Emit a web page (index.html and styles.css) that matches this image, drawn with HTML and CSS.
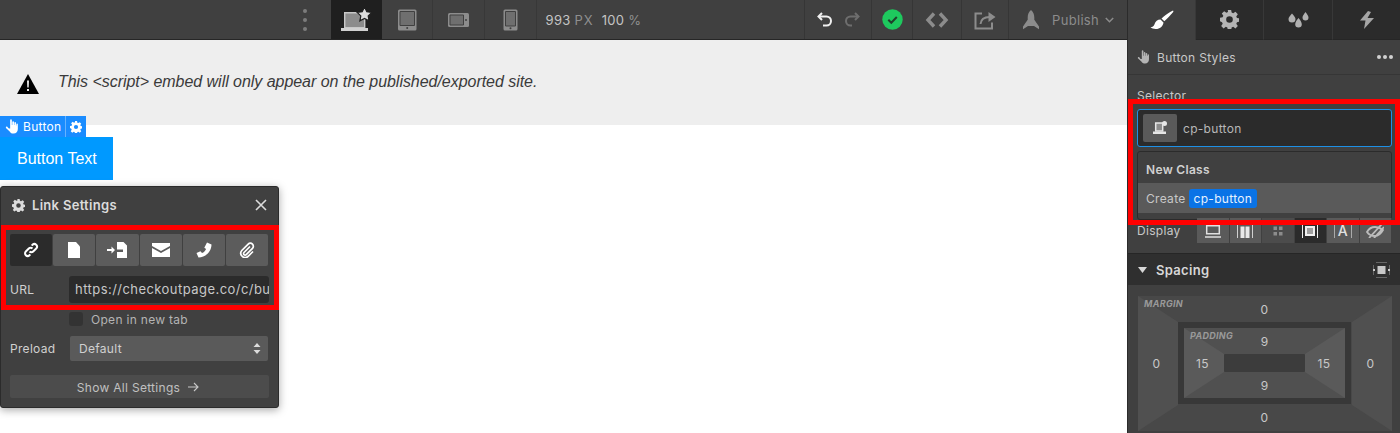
FILE: index.html
```html
<!DOCTYPE html>
<html lang="en">
<head>
    <meta charset="UTF-8">
    <meta name="viewport" content="width=device-width, initial-scale=1.0">
    <title>Designer</title>
    <link rel="stylesheet" href="styles.css">
</head>
<body>
    <svg class="defs" width="0" height="0">
        <symbol id="gear" viewBox="0 0 16 16">
            <path fill-rule="evenodd" d="M6.600 0h2.800l.4 2.200 1.300.6 1.900-1.300 2 2-1.300 1.900.6 1.300 2.200.4v2.800l-2.200.4-.6 1.300 1.300 1.900-2 2-1.900-1.300-1.300.6-.4 2.200H6.600l-.4-2.200-1.300-.6-1.900 1.300-2-2 1.300-1.900-.6-1.300L0 9.400V6.600l2.200-.4.6-1.300L1.500 3l2-2 1.900 1.300 1.300-.6zM8 5.200a2.800 2.800 0 1 0 0 5.600 2.800 2.800 0 0 0 0-5.600z"/>
        </symbol>
        <symbol id="hand" viewBox="0 0 16 16">
            <path d="M5.500 1.200c0-.6.400-1 .9-1s.9.400.9 1v5.300h.5V3.300c0-.5.400-.9.900-.9s.9.400.9.900v3.200h.4V4.200c0-.5.400-.9.900-.9s.8.400.8.900v2.700h.4V5.700c0-.5.400-.8.800-.8s.8.300.8.800v5c0 2.700-1.700 4.800-4.500 4.800-2 0-3.200-.7-4.200-2.300L1 9.500c-.3-.5-.1-1 .3-1.300.4-.3 1-.2 1.300.2l1.500 1.800h1.400z"/>
        </symbol>
    </svg>

    <div class="app">
        <main class="designer">
            <header class="topbar">
                <div class="bar-dots"><span></span><span></span><span></span></div>
                <div class="device active">
                    <svg width="32" height="26" viewBox="0 0 32 26">
                        <path fill="#8c8c8c" stroke="#c8c8c8" stroke-width="1.400" d="M4.700 5.700h20v15h-20z"/>
                        <path fill="#d0d0d0" d="M1 21h27v3H1z"/>
                        <path fill="#dcdcdc" stroke="#1f1f1f" stroke-width="1.200" d="M24.500 0l2.300 4.700 5 .7-3.600 3.500.9 5-4.600-2.400-4.600 2.400.9-5-3.600-3.500 5-.7z"/>
                    </svg>
                </div>
                <div class="device">
                    <svg width="20" height="22" viewBox="0 0 20 22"><rect x="1" y=".5" width="18.500" height="21" rx="1.500" fill="#8c8c8c"/><path fill="#6f6f6f" stroke="#404040" d="M3 2.500h14.500v14H3z"/><circle cx="10.200" cy="19" r="1" fill="#404040"/></svg>
                </div>
                <div class="device device-wide">
                    <svg width="22" height="16" viewBox="0 0 22 16"><rect x="1" y="1" width="21" height="14" rx="1.500" fill="#8c8c8c"/><path fill="#6f6f6f" stroke="#404040" d="M3 3h13.500v10H3z"/><circle cx="19" cy="8" r="1" fill="#404040"/></svg>
                </div>
                <div class="device device-wide">
                    <svg width="15" height="22" viewBox="0 0 15 22"><rect x=".5" y=".5" width="14" height="21" rx="1.500" fill="#8c8c8c"/><path fill="#6f6f6f" stroke="#404040" d="M2.500 2.500h10v14.500h-10z"/><circle cx="7.500" cy="19.300" r="1" fill="#404040"/></svg>
                </div>
                <div class="readout">
                    <span class="num">993</span> <span class="unit">PX</span>
                    <span class="num pct">100</span> <span class="unit">%</span>
                </div>
                <div class="bar-cell history">
                    <svg width="18" height="18" viewBox="0 0 18 18" fill="none" stroke="#f0f0f0" stroke-width="2"><path d="M6 2L2.500 5.500 6 9"/><path d="M3 5.500h7.500a4.500 4.500 0 0 1 0 9H7"/></svg>
                    <svg width="18" height="18" viewBox="0 0 18 18" fill="none" stroke="#6e6e6e" stroke-width="2"><path d="M12 2l3.500 3.500L12 9"/><path d="M15 5.500H7.500a4.500 4.500 0 0 0 0 9H9"/></svg>
                </div>
                <div class="bar-cell status">
                    <svg width="21" height="21" viewBox="0 0 21 21"><circle cx="10.500" cy="10.500" r="10.200" fill="#1ec95e"/><path fill="none" stroke="#20402c" stroke-width="2" d="M6.300 10.700l3 3 5.500-5.700"/></svg>
                </div>
                <div class="bar-cell code">
                    <svg width="24" height="16" viewBox="0 0 24 16" fill="none" stroke="#8c8c8c" stroke-width="3.400"><path d="M9 1.500L3 8l6 6.500"/><path d="M15 1.500L21 8l-6 6.500"/></svg>
                </div>
                <div class="bar-cell export">
                    <svg width="22" height="20" viewBox="0 0 22 20" fill="none" stroke="#8c8c8c" stroke-width="2"><path d="M8 3.500H1.500v15H18v-6"/><path d="M6.500 14c.5-5 3.500-7 9-7"/><path fill="#8c8c8c" stroke="none" d="M14.500 2l7 5-7 5z"/></svg>
                </div>
                <div class="bar-cell publish">
                    <svg width="20" height="20" viewBox="0 0 20 20"><path fill="#8c8c8c" d="M10 0c2.200 1.800 3.300 4.500 3.300 7.500v2.200l4.700 6.800v2.700l-5-3.300h-6l-5 3.300v-2.700l4.700-6.800V7.500C6.700 4.500 7.800 1.800 10 0z"/></svg>
                    <span>Publish</span>
                    <svg class="chev" width="9" height="6" viewBox="0 0 9 6" fill="none" stroke="#8c8c8c" stroke-width="1.500"><path d="M.8 1l3.700 3.700L8.200 1"/></svg>
                </div>
            </header>

            <section class="canvas">
                <div class="embed-note">
                    <svg width="22" height="20" viewBox="0 0 22 20"><path d="M11 0l11 20H0z"/><path fill="#eee" d="M10 6.500h2l-.3 7h-1.400zM10 15h2v2h-2z"/></svg>
                    <p>This &lt;script&gt; embed will only appear on the published/exported site.</p>
                </div>
                <div class="element-tag">
                    <span class="tag-name"><svg width="15" height="15"><use href="#hand"/></svg>Button</span>
                    <span class="tag-gear"><svg width="12" height="12"><use href="#gear"/></svg></span>
                </div>
                <a class="cp-button">Button Text</a>

                <div class="link-settings">
                    <div class="ls-head">
                        <svg width="13" height="13"><use href="#gear"/></svg>
                        <span>Link Settings</span>
                        <svg class="ls-close" width="12" height="12" viewBox="0 0 12 12" fill="none" stroke="#dcdcdc" stroke-width="1.600"><path d="M1 1l10 10M11 1L1 11"/></svg>
                    </div>
                    <div class="ls-tabs">
                        <span class="ls-tab active">
                            <svg width="16" height="16" viewBox="0 0 16 16" fill="none" stroke="#fff" stroke-width="2"><path d="M6.500 9.500a2.600 2.600 0 0 0 3.700 0l3-3a2.600 2.600 0 0 0-3.700-3.700L8.700 3.600"/><path d="M9.500 6.500a2.600 2.600 0 0 0-3.700 0l-3 3a2.600 2.600 0 0 0 3.700 3.700l.8-.8"/></svg>
                        </span>
                        <span class="ls-tab">
                            <svg width="14" height="16" viewBox="0 0 14 16"><path fill="#fff" d="M1 0h8l4 4.500V16H1z"/></svg>
                        </span>
                        <span class="ls-tab">
                            <svg width="22" height="16" viewBox="0 0 22 16"><path fill="#fff" d="M11 0h6.500L21 3.500V16H11v-6h6V7.500h-6z"/><path fill="#fff" d="M1 7h4.500V4.500L9 8l-3.500 3.500V9H1z"/></svg>
                        </span>
                        <span class="ls-tab">
                            <svg width="18" height="14" viewBox="0 0 18 14"><path fill="#fff" d="M0 0h18v3l-9 5-9-5z"/><path fill="#fff" d="M0 5l9 5 9-5v9H0z"/></svg>
                        </span>
                        <span class="ls-tab">
                            <svg width="16" height="16" viewBox="0 0 16 16"><path fill="#fff" d="M11 .5l4.500 2C15.500 9.500 9.500 15.500 2.500 15.500L.5 11l4-1.800 1.500 1.800c1.800-.8 3.300-2.300 4.100-4.100L8.300 5.800z"/></svg>
                        </span>
                        <span class="ls-tab">
                            <svg width="16" height="16" viewBox="0 0 16 16" fill="none" stroke="#fff" stroke-width="1.700"><path d="M11 4.500l-6 6a1.500 1.500 0 0 0 2.200 2.200l6.300-6.400a3 3 0 0 0-4.300-4.200L2.800 8.500a4.300 4.300 0 0 0 6.100 6L14 9.500"/></svg>
                        </span>
                    </div>
                    <div class="ls-row ls-url">
                        <label>URL</label>
                        <div class="ls-input">https://checkoutpage.co/c/button</div>
                    </div>
                    <div class="ls-check"><span class="box"></span>Open in new tab</div>
                    <div class="ls-row ls-preload">
                        <label>Preload</label>
                        <div class="ls-select">Default
                            <svg width="8" height="11" viewBox="0 0 8 11" fill="#dcdcdc"><path d="M4 0l3.500 4h-7zM4 11L.5 7h7z"/></svg>
                        </div>
                    </div>
                    <div class="ls-all">Show All Settings
                        <svg width="11" height="10" viewBox="0 0 11 10" fill="none" stroke="#c8c8c8" stroke-width="1.100"><path d="M0 5h10M6 1l4 4-4 4"/></svg>
                    </div>
                    <div class="red-frame ls-frame"></div>
                </div>
            </section>
        </main>

        <aside class="panel">
            <nav class="panel-tabs">
                <span class="panel-tab active">
                    <svg width="24" height="20" viewBox="0 0 24 20" fill="#fff"><path d="M23 .5c.6.500.5 1.100 0 1.700-2.500 3-6 6.800-8.700 9L11.500 8.500C14.500 5.500 19.500 2 23 .5z"/><path d="M10.500 9.500l3 3c-.3 4-4.300 6.800-8 6.500-2 0-3.800-.5-5-1.700 2.500-.3 3.300-1.300 4-3 .9-2.800 3-4.800 6-4.800z"/></svg>
                </span>
                <span class="panel-tab"><svg width="19" height="19" fill="#b4b4b4"><use href="#gear"/></svg></span>
                <span class="panel-tab">
                    <svg width="21" height="16" viewBox="0 0 21 16" fill="#b0b0b0"><path d="M4 1.500c1.800 2.300 3.500 3.700 3.500 5.500a3.500 3.500 0 0 1-7 0c0-1.800 1.700-3.200 3.500-5.500zM17.500 0c1.500 2.200 3 3.700 3 5.500a3 3 0 0 1-6 0c0-1.800 1.500-3.300 3-5.500zM10.500 6c1.600 2.200 3.300 4 3.300 6.300a3.300 3.300 0 0 1-6.600 0c0-2.300 1.700-4.100 3.300-6.300z"/></svg>
                </span>
                <span class="panel-tab">
                    <svg width="14" height="18" viewBox="0 0 14 18" fill="#a6a6a6"><path d="M8 0L0 9.500h5.500L4 18l10-11H7.500L11 1z"/></svg>
                </span>
            </nav>

            <div class="panel-head">
                <svg width="14" height="14" fill="#b4b4b4"><use href="#hand"/></svg>
                <span>Button Styles</span>
                <span class="more"><i></i><i></i><i></i></span>
            </div>

            <div class="selector">
                <label>Selector</label>
                <div class="selector-field">
                    <span class="selector-icon">
                        <svg width="15" height="14" viewBox="0 0 15 14"><path fill="#8c8c8c" stroke="#e6e6e6" stroke-width="1.500" d="M2.700 2h7v8h-7z"/><path fill="#e6e6e6" d="M0 10.500h13V13H0z"/><circle cx="11.500" cy="2.500" r="2.500" fill="#e6e6e6"/></svg>
                    </span>
                    cp-button
                </div>
                <div class="selector-menu">
                    <div class="menu-title">New Class</div>
                    <div class="menu-create">Create <span class="chip">cp-button</span></div>
                </div>
            </div>

            <div class="display-row">
                <label>Display</label>
                <div class="display-btns">
                    <span class="dbtn"><svg width="16" height="14" viewBox="0 0 16 14" fill="none" stroke="#e0e0e0" stroke-width="1.500"><path d="M1.700 1.700h12.600v8H1.700zM0 13h16"/></svg></span>
                    <span class="dbtn"><svg width="16" height="14" viewBox="0 0 16 14"><path fill="none" stroke="#d0d0d0" d="M.5 14V.5h15V14"/><path fill="#e8e8e8" d="M3.500 2.500h4v11.500h-4zM8.500 2.500h4v11.500h-4z"/></svg></span>
                    <span class="dbtn dim"><svg width="16" height="14" viewBox="0 0 16 14" fill="#8c8c8c"><path d="M3.500 2.500h3.500v3.500H3.500zM9 2.500h3.500v3.500H9zM3.500 8h3.500v3.500H3.500zM9 8h3.500v3.500H9z"/></svg></span>
                    <span class="dbtn on"><svg width="16" height="14" viewBox="0 0 16 14"><path fill="none" stroke="#f0f0f0" d="M.5 0v14M15.500 0v14"/><path fill="none" stroke="#f0f0f0" stroke-width="2" d="M4 3h8v8H4z"/><path fill="#a0a0a0" d="M5 4h6v6H5z"/></svg></span>
                    <span class="dbtn dtext"><span>A</span></span>
                    <span class="dbtn"><svg width="18" height="14" viewBox="0 0 18 14" fill="none" stroke="#bcbcbc" stroke-width="1.800"><path d="M1 8c2-3.500 5-5 8-5s6 1.500 8 3c-2 3.500-5 6-8 6s-6-1-8-4zM3 14L16 0M8 14L18 3"/></svg></span>
                </div>
            </div>

            <div class="section-head">
                <svg width="9" height="6" viewBox="0 0 9 6" fill="#d8d8d8"><path d="M0 0h9L4.500 6z"/></svg>
                <span>Spacing</span>
                <svg class="section-icon" width="17" height="16" viewBox="0 0 17 16"><path fill="none" stroke="#666" d="M.5 3v10M16.500 3v10M3 .5h11M3 15.500h11"/><path fill="#c8c8c8" d="M4.500 4h8v8h-8z"/><path fill="#c8c8c8" d="M0 7h2v2H0zM15 7h2v2h-2z"/></svg>
            </div>

            <div class="box-model">
                <svg class="box-shade" viewBox="0 0 254 135" preserveAspectRatio="none">
                    <path fill="#484848" d="M0 0h254v135H0z"/>
                    <path fill="#505050" d="M0 0l40 26v83L0 135zM254 0l-40 26v83l40 26z"/>
                </svg>
                <span class="box-label">MARGIN</span>
                <span class="bm-top">0</span>
                <span class="bm-left">0</span>
                <div class="pad-box">
                    <svg class="box-shade" viewBox="0 0 161 70" preserveAspectRatio="none">
                        <path fill="#505050" d="M0 0h161v70H0z"/>
                        <path fill="#5a5a5a" d="M0 0l40 26v18L0 70zM161 0l-40 26v18l40 26z"/>
                    </svg>
                    <span class="box-label">PADDING</span>
                    <span class="bm-top">9</span>
                    <span class="bm-left">15</span>
                    <div class="content-box"></div>
                    <span class="bm-right">15</span>
                    <span class="bm-bottom">9</span>
                </div>
                <span class="bm-right">0</span>
                <span class="bm-bottom">0</span>
            </div>

            <div class="red-frame selector-frame"></div>
        </aside>
    </div>
</body>
</html>
```

FILE: styles.css
```css
* {
    box-sizing: border-box;
}

html, body {
    margin: 0;
    padding: 0;
    height: 433px;
    overflow: hidden;
    background: #fff;
}

body {
    font-family: 'Inter', 'Liberation Sans', sans-serif;
    font-size: 12px;
    letter-spacing: 0.3px;
    color: #d9d9d9;
}

.defs {
    position: absolute;
}

.app {
    display: grid;
    grid-template-columns: 1127px 273px;
    height: 433px;
}

.designer {
    display: flex;
    flex-direction: column;
    min-width: 0;
}

/* Top bar */
.topbar {
    display: flex;
    height: 40px;
    flex: none;
    background: #404040;
    border-bottom: 1px solid #262626;
}

.bar-dots {
    width: 331px;
    padding-right: 24px;
    display: flex;
    flex-direction: column;
    align-items: flex-end;
    justify-content: center;
    gap: 5px;
}

.bar-dots span {
    width: 4px;
    height: 4px;
    border-radius: 50%;
    background: #7c7c7c;
}

.device {
    width: 51px;
    display: flex;
    align-items: center;
    justify-content: center;
    border-right: 1px solid #383838;
}

.device-wide {
    width: 52px;
}

.device.active {
    background: #1f1f1f;
    border-right: 0;
}

.readout {
    width: 268px;
    padding: 0 0 0 9px;
    font-size: 13px;
    line-height: 40px;
    white-space: nowrap;
}

.readout .num {
    color: #c4c4c4;
}

.readout .unit {
    color: #8f8f8f;
    letter-spacing: 1px;
}

.readout .pct {
    margin-left: 4px;
}

.bar-cell {
    display: flex;
    align-items: center;
    justify-content: center;
    border-left: 1px solid #363636;
}

.history {
    width: 67px;
    gap: 9px;
}

.status {
    width: 41px;
}

.code {
    width: 49px;
}

.export {
    width: 47px;
}

.publish {
    width: 119px;
    gap: 0;
    justify-content: flex-start;
    padding-left: 12px;
    color: #8c8c8c;
    font-size: 13px;
}

.publish span {
    margin-left: 11px;
}

.publish .chev {
    margin-left: 6px;
}

/* Canvas */
.canvas {
    position: relative;
    flex: 1;
    background: #fff;
}

.embed-note {
    height: 85px;
    background: #eeeeee;
    display: flex;
    align-items: center;
    padding: 0 0 2px 17px;
    gap: 19px;
}

.embed-note svg {
    margin-top: 4px;
}

.embed-note p {
    margin: 0;
    font-family: 'Liberation Sans', Arial, sans-serif;
    font-style: italic;
    font-size: 16px;
    letter-spacing: -0.04px;
    color: #3a3a3a;
}

.element-tag {
    position: absolute;
    left: 0;
    top: 76px;
    height: 21px;
    display: flex;
    background: #1a8cff;
    color: #fff;
    font-size: 12px;
}

.tag-name {
    display: flex;
    align-items: center;
    gap: 3px;
    width: 66px;
    padding-left: 5px;
    border-right: 1px solid #66b3ff;
}

.tag-name svg,
.tag-gear svg {
    fill: #fff;
}

.tag-gear {
    width: 20px;
    display: flex;
    align-items: center;
    justify-content: center;
}

.cp-button {
    display: block;
    width: 113px;
    margin-top: 12px;
    padding: 9px 17px;
    background: #0099ff;
    color: #fff;
    font-family: 'Liberation Sans', Arial, sans-serif;
    font-size: 16px;
    line-height: 25px;
    letter-spacing: 0;
    white-space: nowrap;
}

/* Link settings popup */
.link-settings {
    position: absolute;
    left: 0;
    top: 146px;
    width: 279px;
    height: 222px;
    background: #404040;
    border: 1px solid #2b2b2b;
    border-radius: 3px;
    box-shadow: 0 2px 8px rgba(0, 0, 0, 0.35);
    padding: 0 9px;
}

.ls-head {
    display: flex;
    align-items: center;
    height: 36px;
    font-size: 13px;
    font-weight: 600;
    color: #dcdcdc;
    gap: 7px;
    padding-left: 2px;
}

.ls-head > svg:first-child {
    fill: #dcdcdc;
}

.ls-close {
    margin-left: auto;
    margin-right: 2px;
}

.ls-tabs {
    display: grid;
    grid-template-columns: repeat(6, 1fr);
    gap: 1px;
    width: 258px;
    height: 32px;
    margin-top: 11px;
}

.ls-tab {
    display: flex;
    align-items: center;
    justify-content: center;
    background: #5c5c5c;
    border-radius: 2px;
}

.ls-tab.active {
    background: #2b2b2b;
}

.ls-row {
    display: flex;
    align-items: center;
}

.ls-row label {
    width: 59px;
    color: #d0d0d0;
    font-size: 12px;
}

.ls-url {
    margin-top: 10px;
}

.ls-input {
    width: 200px;
    height: 27px;
    padding: 0 3px 0 6px;
    background: #2b2b2b;
    border-radius: 3px;
    font-size: 13px;
    letter-spacing: 0.45px;
    line-height: 27px;
    color: #c8c8c8;
    overflow: hidden;
    white-space: nowrap;
}

.ls-check {
    display: flex;
    align-items: center;
    height: 14px;
    margin: 9px 0 0 59px;
    gap: 8px;
    color: #b4b4b4;
    font-size: 12px;
}

.ls-check .box {
    width: 14px;
    height: 14px;
    background: #333;
    border-radius: 3px;
}

.ls-preload {
    margin-top: 10px;
}

.ls-select {
    display: flex;
    align-items: center;
    justify-content: space-between;
    width: 198px;
    height: 25px;
    margin-left: 1px;
    padding: 0 7px 0 9px;
    background: #5a5a5a;
    border-radius: 2px;
    color: #d0d0d0;
}

.ls-all {
    display: flex;
    align-items: center;
    justify-content: center;
    gap: 8px;
    width: 259px;
    height: 23px;
    margin-top: 14px;
    padding: 1px 3px 0 0;
    background: #4c4c4c;
    border-radius: 2px;
    color: #c0c0c0;
}

.red-frame {
    position: absolute;
    border: 5px solid #f00;
    pointer-events: none;
}

.ls-frame {
    left: 0;
    top: 38px;
    width: 278px;
    height: 85px;
}

/* Right panel */
.panel {
    position: relative;
    background: #404040;
    border-left: 1px solid #2b2b2b;
}

.panel-tabs {
    display: grid;
    grid-template-columns: 68px 68px 69px 67px;
    height: 40px;
    background: #2b2b2b;
}

.panel-tab {
    display: flex;
    align-items: center;
    justify-content: center;
    border-bottom: 1px solid #262626;
    border-right: 1px solid #383838;
}

.panel-tab:last-child {
    border-right: 0;
}

.panel-tab.active {
    background: #404040;
    border-bottom: 0;
}

.panel-head {
    display: flex;
    align-items: center;
    gap: 6px;
    height: 35px;
    padding: 0 7px 0 9px;
    border-bottom: 1px solid #363636;
    color: #c8c8c8;
}

.more {
    display: flex;
    gap: 2px;
    margin-left: auto;
}

.more i {
    width: 4px;
    height: 4px;
    border-radius: 50%;
    background: #d0d0d0;
}

.selector {
    height: 143px;
    padding: 13px 8px 0 9px;
}

.selector label {
    display: block;
    line-height: 15px;
    color: #c8c8c8;
}

.selector-field {
    display: flex;
    align-items: center;
    gap: 6px;
    height: 38px;
    margin-top: 6px;
    padding: 0 5px;
    background: #2b2b2b;
    border: 1px solid #1e90e6;
    border-radius: 3px;
    color: #b8b8b8;
    font-size: 12px;
}

.selector-icon {
    display: flex;
    align-items: center;
    justify-content: center;
    width: 34px;
    height: 28px;
    background: #5a5a5a;
    border-radius: 2px;
}

.selector-menu {
    margin-top: 4px;
    background: #404040;
    border: 1px solid #2b2b2b;
    border-radius: 3px;
    padding-bottom: 6px;
}

.menu-title {
    height: 31px;
    padding-left: 8px;
    line-height: 36px;
    font-weight: 600;
    color: #d0d0d0;
}

.menu-create {
    display: flex;
    align-items: center;
    gap: 3px;
    height: 30px;
    padding-left: 8px;
    background: #5a5a5a;
    color: #c8c8c8;
}

.chip {
    padding: 2px 5px;
    background: #0a73e6;
    border-radius: 3px;
    color: #e6f2ff;
}

.display-row {
    display: flex;
    align-items: center;
    height: 25px;
    padding-left: 9px;
}

.display-row label {
    width: 60px;
    color: #c8c8c8;
}

.display-btns {
    display: grid;
    grid-template-columns: repeat(6, 32.500px);
}

.dbtn {
    display: flex;
    align-items: center;
    justify-content: center;
    height: 25px;
    background: #5a5a5a;
    border-right: 1px solid #404040;
}

.dbtn.dim {
    background: #4c4c4c;
}

.dbtn.on {
    background: #2b2b2b;
}

.dtext {
    font-size: 14px;
    font-weight: 500;
    color: #e0e0e0;
}

.dtext span {
    padding: 0 3px;
    line-height: 14px;
    border-left: 1px solid #aaa;
    border-right: 1px solid #aaa;
}

.section-head {
    display: flex;
    align-items: center;
    height: 32px;
    margin-top: 10px;
    padding: 0 10px 0 10px;
    gap: 9px;
    background: #2f2f2f;
    border-top: 1px solid #262626;
    font-size: 13px;
    font-weight: 600;
    color: #d8d8d8;
}

.section-icon {
    margin-left: auto;
}

/* Margin and padding box */
.box-model,
.pad-box {
    position: relative;
    display: grid;
    text-align: center;
    align-items: center;
    color: #c8c8c8;
}

.box-model {
    grid-template-columns: 40px 1fr 41px;
    grid-template-rows: 26px 82px 27px;
    width: 254px;
    height: 135px;
    margin: 11px 0 0 10px;
}

.pad-box {
    grid-template-columns: 40px 1fr 40px;
    grid-template-rows: 26px 18px 26px;
    grid-column: 2;
    grid-row: 2;
    border: 6px solid #383838;
    height: 82px;
}

.box-model > span,
.pad-box > span,
.pad-box > .content-box {
    position: relative;
}

.bm-left {
    margin-right: 3px;
}

.bm-right {
    margin-right: 2px;
}

.box-shade {
    position: absolute;
    left: 0;
    top: 0;
    width: 100%;
    height: 100%;
}

.box-label {
    position: absolute !important;
    left: 6px;
    top: 2px;
    font-size: 9px;
    font-style: italic;
    font-weight: 700;
    color: #999;
}

.bm-top {
    grid-column: 2;
    grid-row: 1;
}

.bm-left {
    grid-column: 1;
    grid-row: 2;
}

.bm-right {
    grid-column: 3;
    grid-row: 2;
}

.bm-bottom {
    grid-column: 2;
    grid-row: 3;
}

.content-box {
    grid-column: 2;
    grid-row: 2;
    height: 18px;
    background: #3c3c3c;
    border-radius: 1px;
}

.selector-frame {
    left: 0;
    top: 99px;
    width: 272px;
    height: 126px;
}
```
